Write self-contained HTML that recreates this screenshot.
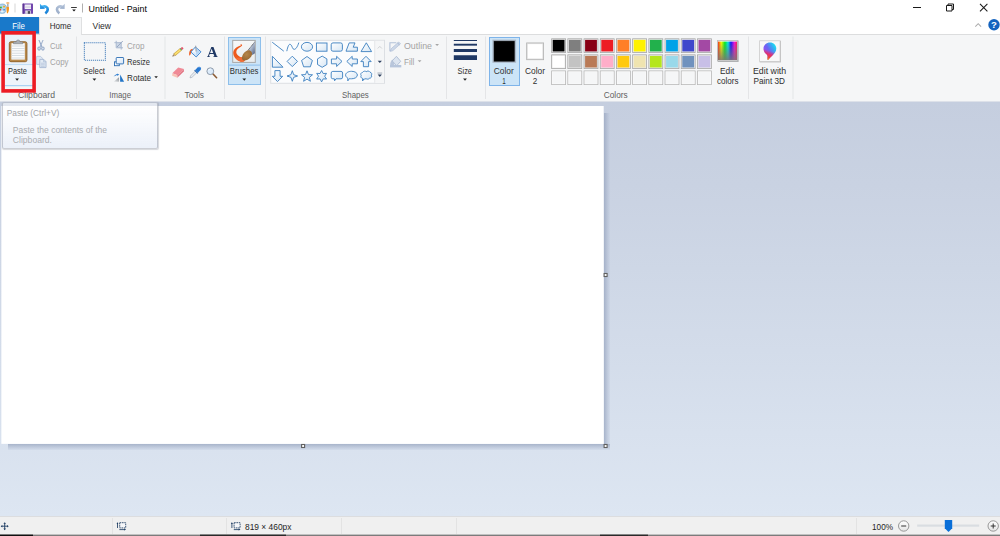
<!DOCTYPE html>
<html>
<head>
<meta charset="utf-8">
<title>Untitled - Paint</title>
<style>
html,body{margin:0;padding:0;}
body{width:1000px;height:536px;overflow:hidden;position:relative;background:#fff;font-family:"Liberation Sans",sans-serif;font-size:9px;color:#1e1e1e;}
.a{position:absolute;}
svg{overflow:visible;}
.t{position:absolute;white-space:nowrap;z-index:5;}
</style>
</head>
<body>

<div class="a" style="left:0px;top:0px;width:1000px;height:34px;background:#fff;"></div>
<div class="a" style="left:0px;top:34px;width:1000px;height:68px;background:#f5f6f7;border-top:1px solid #dcddde;box-sizing:border-box;"></div>
<div class="a" style="left:0px;top:102px;width:1000px;height:414px;background:linear-gradient(#c5cedf,#c9d2e2 20%,#dde6f2);"></div>
<div class="a" style="left:0px;top:101px;width:1000px;height:1px;background:#dde1e9;"></div>
<svg class="a" style="left:0px;top:17px;" width="40" height="18" viewBox="0 0 40 18"><rect x="0" y="0" width="39" height="16.7" rx="0" fill="#1979ca"/></svg>
<div class="a" style="left:39px;top:17px;width:43px;height:18px;background:#f5f6f7;border:1px solid #dfe0e1;border-bottom:none;box-sizing:border-box;"></div>
<div class="a" style="left:8px;top:444px;width:602px;height:6px;background:linear-gradient(rgba(156,169,194,.8),rgba(172,184,207,.5) 60%,rgba(195,206,226,.3));"></div>
<div class="a" style="left:604px;top:113px;width:6px;height:331px;background:linear-gradient(to right,rgba(156,169,194,.8),rgba(172,184,207,.5) 60%,rgba(195,206,226,.3));"></div>
<svg class="a" style="left:1px;top:106px;" width="604" height="339" viewBox="0 0 604 339"><g transform="translate(0.35 0)"><rect x="0" y="0" width="602.35" height="337.85" rx="0" fill="#fff"/></g></svg>
<svg class="a" style="left:603px;top:443px;" width="6" height="7" viewBox="0 0 6 7"><g transform="translate(0.55 0.95)"><rect x="0.55" y="0.55" width="2.9999999999999996" height="2.9999999999999996" rx="0" fill="#fff" stroke="#606060" stroke-width="1.1"/></g></svg>
<svg class="a" style="left:603px;top:272px;" width="6" height="7" viewBox="0 0 6 7"><g transform="translate(0.55 0.95)"><rect x="0.55" y="0.55" width="2.9999999999999996" height="2.9999999999999996" rx="0" fill="#fff" stroke="#606060" stroke-width="1.1"/></g></svg>
<svg class="a" style="left:301px;top:443px;" width="6" height="7" viewBox="0 0 6 7"><g transform="translate(0.05 0.95)"><rect x="0.55" y="0.55" width="2.9999999999999996" height="2.9999999999999996" rx="0" fill="#fff" stroke="#606060" stroke-width="1.1"/></g></svg>
<div class="a" style="left:0px;top:516px;width:1000px;height:19px;background:#f0f0f0;border-top:1px solid #dcdddf;box-sizing:border-box;"></div>
<div class="a" style="left:112px;top:518px;width:1px;height:16px;background:#e3e3e3;"></div>
<div class="a" style="left:226px;top:518px;width:1px;height:16px;background:#e3e3e3;"></div>
<div class="a" style="left:341px;top:518px;width:1px;height:16px;background:#e3e3e3;"></div>
<div class="a" style="left:456px;top:518px;width:1px;height:16px;background:#e3e3e3;"></div>
<div class="a" style="left:856px;top:518px;width:1px;height:16px;background:#e3e3e3;"></div>
<svg class="a" style="left:0px;top:534px;" width="1001" height="3" viewBox="0 0 1001 3"><g transform="translate(0 0.6)"><rect x="0" y="0" width="1000" height="1.4" rx="0" fill="#7c7c7c"/></g></svg>
<svg class="a" style="left:0px;top:534px;" width="34" height="3" viewBox="0 0 34 3"><g transform="translate(0 0.6)"><rect x="0" y="0" width="33" height="1.4" rx="0" fill="#111"/></g></svg>
<div class="t" style="left:0;top:0;font-size:9.2px;line-height:12px;height:12px;color:#000;transform:translate(88.60px,2.78px) scaleX(0.9679);transform-origin:0 0;">Untitled - Paint</div>
<div class="t" style="left:0;top:0;font-size:8.8px;line-height:12px;height:12px;color:#fff;transform:translate(12.20px,20.06px) scaleX(0.9027);transform-origin:0 0;">File</div>
<div class="t" style="left:0;top:0;font-size:8.8px;line-height:12px;height:12px;color:#2b2b2b;transform:translate(49.80px,20.06px) scaleX(0.9160);transform-origin:0 0;">Home</div>
<div class="t" style="left:0;top:0;font-size:8.8px;line-height:12px;height:12px;color:#2b2b2b;transform:translate(92.60px,20.06px) scaleX(0.9728);transform-origin:0 0;">View</div>
<svg class="a" style="left:76px;top:36px;" width="2" height="64" viewBox="0 0 2 64"><g transform="translate(0.0 0.5)"><rect x="0" y="0" width="1" height="62.5" rx="0" fill="#e4e5e7"/></g></svg>
<svg class="a" style="left:164px;top:36px;" width="3" height="64" viewBox="0 0 3 64"><g transform="translate(0.5 0.5)"><rect x="0" y="0" width="1" height="62.5" rx="0" fill="#e4e5e7"/></g></svg>
<svg class="a" style="left:224px;top:36px;" width="2" height="64" viewBox="0 0 2 64"><g transform="translate(0.0 0.5)"><rect x="0" y="0" width="1" height="62.5" rx="0" fill="#e4e5e7"/></g></svg>
<svg class="a" style="left:265px;top:36px;" width="2" height="64" viewBox="0 0 2 64"><g transform="translate(0.0 0.5)"><rect x="0" y="0" width="1" height="62.5" rx="0" fill="#e4e5e7"/></g></svg>
<svg class="a" style="left:446px;top:36px;" width="2" height="64" viewBox="0 0 2 64"><g transform="translate(0.0 0.5)"><rect x="0" y="0" width="1" height="62.5" rx="0" fill="#e4e5e7"/></g></svg>
<svg class="a" style="left:485px;top:36px;" width="2" height="64" viewBox="0 0 2 64"><g transform="translate(0.0 0.5)"><rect x="0" y="0" width="1" height="62.5" rx="0" fill="#e4e5e7"/></g></svg>
<svg class="a" style="left:748px;top:36px;" width="2" height="64" viewBox="0 0 2 64"><g transform="translate(0.0 0.5)"><rect x="0" y="0" width="1" height="62.5" rx="0" fill="#e4e5e7"/></g></svg>
<svg class="a" style="left:792px;top:36px;" width="3" height="64" viewBox="0 0 3 64"><g transform="translate(0.5 0.5)"><rect x="0" y="0" width="1" height="62.5" rx="0" fill="#e4e5e7"/></g></svg>
<div class="t" style="left:0;top:0;font-size:8.8px;line-height:12px;height:12px;color:#5f5f5f;transform:translate(18.00px,89.46px) scaleX(0.9824);transform-origin:0 0;">Clipboard</div>
<div class="t" style="left:0;top:0;font-size:8.8px;line-height:12px;height:12px;color:#5f5f5f;transform:translate(109.30px,89.46px) scaleX(0.8873);transform-origin:0 0;">Image</div>
<div class="t" style="left:0;top:0;font-size:8.8px;line-height:12px;height:12px;color:#5f5f5f;transform:translate(184.50px,89.46px) scaleX(0.9493);transform-origin:0 0;">Tools</div>
<div class="t" style="left:0;top:0;font-size:8.8px;line-height:12px;height:12px;color:#5f5f5f;transform:translate(342.00px,89.46px) scaleX(0.8946);transform-origin:0 0;">Shapes</div>
<div class="t" style="left:0;top:0;font-size:8.8px;line-height:12px;height:12px;color:#5f5f5f;transform:translate(603.80px,89.46px) scaleX(0.9399);transform-origin:0 0;">Colors</div>
<div class="t" style="left:0;top:0;font-size:8.8px;line-height:12px;height:12px;color:#2f2f2f;transform:translate(8.00px,65.06px) scaleX(0.8444);transform-origin:0 0;">Paste</div>
<div class="t" style="left:0;top:0;font-size:8.8px;line-height:12px;height:12px;color:#a3a3a3;transform:translate(50.00px,40.06px) scaleX(0.8763);transform-origin:0 0;">Cut</div>
<div class="t" style="left:0;top:0;font-size:8.8px;line-height:12px;height:12px;color:#a3a3a3;transform:translate(50.00px,56.06px) scaleX(0.9006);transform-origin:0 0;">Copy</div>
<div class="t" style="left:0;top:0;font-size:8.8px;line-height:12px;height:12px;color:#2f2f2f;transform:translate(83.30px,65.06px) scaleX(0.8873);transform-origin:0 0;">Select</div>
<div class="t" style="left:0;top:0;font-size:8.8px;line-height:12px;height:12px;color:#a3a3a3;transform:translate(127.00px,40.26px) scaleX(0.9175);transform-origin:0 0;">Crop</div>
<div class="t" style="left:0;top:0;font-size:8.8px;line-height:12px;height:12px;color:#2f2f2f;transform:translate(127.00px,56.26px) scaleX(0.8551);transform-origin:0 0;">Resize</div>
<div class="t" style="left:0;top:0;font-size:8.8px;line-height:12px;height:12px;color:#2f2f2f;transform:translate(127.00px,72.26px) scaleX(0.9257);transform-origin:0 0;">Rotate</div>
<div class="a" style="left:228px;top:37px;width:33px;height:48px;background:#cce4f7;border:1px solid #8dbfeb;box-sizing:border-box;"></div>
<svg class="a" style="left:229px;top:64px;" width="32" height="3" viewBox="0 0 32 3"><g transform="translate(0 0.6)"><rect x="0" y="0" width="31" height="1" rx="0" fill="#8dbfeb"/></g></svg>
<div class="t" style="left:0;top:0;font-size:8.8px;line-height:12px;height:12px;color:#2f2f2f;transform:translate(229.80px,65.26px) scaleX(0.8860);transform-origin:0 0;">Brushes</div>
<div class="t" style="left:0;top:0;font-size:8.8px;line-height:12px;height:12px;color:#a3a3a3;transform:translate(404.00px,40.26px) scaleX(1.0043);transform-origin:0 0;">Outline</div>
<div class="t" style="left:0;top:0;font-size:8.8px;line-height:12px;height:12px;color:#a3a3a3;transform:translate(404.00px,56.26px) scaleX(0.9252);transform-origin:0 0;">Fill</div>
<div class="t" style="left:0;top:0;font-size:8.8px;line-height:12px;height:12px;color:#2f2f2f;transform:translate(457.50px,65.26px) scaleX(0.8470);transform-origin:0 0;">Size</div>
<div class="a" style="left:489px;top:37px;width:31px;height:49px;background:#cce4f7;border:1px solid #7eb4ea;box-sizing:border-box;"></div>
<div class="t" style="left:0;top:0;font-size:8.8px;line-height:12px;height:12px;color:#2f2f2f;transform:translate(493.80px,65.26px) scaleX(0.9511);transform-origin:0 0;">Color</div>
<div class="t" style="left:0;top:0;font-size:8.8px;line-height:12px;height:12px;color:#2f2f2f;transform:translate(502.30px,74.56px) scaleX(0.7152);transform-origin:0 0;">1</div>
<div class="t" style="left:0;top:0;font-size:8.8px;line-height:12px;height:12px;color:#2f2f2f;transform:translate(525.00px,65.26px) scaleX(0.9511);transform-origin:0 0;">Color</div>
<div class="t" style="left:0;top:0;font-size:8.8px;line-height:12px;height:12px;color:#2f2f2f;transform:translate(532.80px,74.56px) scaleX(0.9196);transform-origin:0 0;">2</div>
<div class="t" style="left:0;top:0;font-size:8.8px;line-height:12px;height:12px;color:#2f2f2f;transform:translate(720.00px,65.26px) scaleX(0.9496);transform-origin:0 0;">Edit</div>
<div class="t" style="left:0;top:0;font-size:8.8px;line-height:12px;height:12px;color:#2f2f2f;transform:translate(717.00px,74.56px) scaleX(0.9160);transform-origin:0 0;">colors</div>
<div class="t" style="left:0;top:0;font-size:8.8px;line-height:12px;height:12px;color:#2f2f2f;transform:translate(753.00px,65.26px) scaleX(0.9983);transform-origin:0 0;">Edit with</div>
<div class="t" style="left:0;top:0;font-size:8.8px;line-height:12px;height:12px;color:#2f2f2f;transform:translate(753.50px,74.56px) scaleX(0.9333);transform-origin:0 0;">Paint 3D</div>
<div class="a" style="left:2px;top:102px;width:156px;height:47px;background:linear-gradient(rgba(255,255,255,.5),rgba(246,248,252,.7) 40%,rgba(232,238,248,.85));border:1px solid rgba(105,110,128,.34);border-radius:2px;box-sizing:border-box;box-shadow:0.5px 0.5px 1px rgba(120,125,140,.3);"></div>
<div class="t" style="left:0;top:0;font-size:8.8px;line-height:12px;height:12px;color:#a2a4a8;transform:translate(6.80px,107.26px) scaleX(0.9441);transform-origin:0 0;">Paste (Ctrl+V)</div>
<div class="t" style="left:0;top:0;font-size:8.8px;line-height:12px;height:12px;color:#aaacb0;transform:translate(12.80px,124.26px) scaleX(0.9677);transform-origin:0 0;">Paste the contents of the</div>
<div class="t" style="left:0;top:0;font-size:8.8px;line-height:12px;height:12px;color:#aaacb0;transform:translate(12.80px,133.86px) scaleX(0.9773);transform-origin:0 0;">Clipboard.</div>
<div class="t" style="left:0;top:0;font-size:8.8px;line-height:12px;height:12px;color:#1e1e1e;transform:translate(245.00px,520.56px) scaleX(0.9551);transform-origin:0 0;">819 × 460px</div>
<div class="t" style="left:0;top:0;font-size:8.8px;line-height:12px;height:12px;color:#1e1e1e;transform:translate(872.00px,520.56px) scaleX(0.9331);transform-origin:0 0;">100%</div>
<svg class="a" style="left:0px;top:2px;" width="11" height="13" viewBox="0 0 11 13">
<path d="M-3 7.2 C-3 3.6 0 2.0 2.6 2.0 C5.2 2.0 6.4 3.6 6.3 5.6 C6.2 7.0 5.4 7.4 5.6 8.6 C5.8 9.8 5.2 11.3 2.4 11.3 C-0.6 11.3 -3 10.2 -3 7.2 Z" fill="#b5d4ec" stroke="#6aa5cf" stroke-width="0.7"/>
<ellipse cx="2.2" cy="9.6" rx="1.5" ry="1.0" fill="#e9f3fb"/>
<circle cx="0.9" cy="5.5" r="1.0" fill="#37b34a"/>
<rect x="3.1" y="3.7" width="1.9" height="1.8" rx="0.4" fill="#f6b21b"/>
<circle cx="0.3" cy="7.7" r="0.9" fill="#e8473a"/>
<rect x="3.3" y="6.9" width="1.6" height="1.6" rx="0.4" fill="#3d8ed3"/>
<path d="M6.5 4.8 L8.9 4.8 C9.2 7 9 9.4 7.8 11.3 C7.2 11.6 6.9 11.0 6.8 10.2 C6.5 8.4 6.4 6.6 6.5 4.8 Z" fill="#f5961f"/>
<rect x="7.2" y="2.0" width="1.3" height="2.8" fill="#9a9fa6"/>
<ellipse cx="7.8" cy="1.0" rx="1.7" ry="1.0" fill="#f0b87c"/>
</svg>
<svg class="a" style="left:14px;top:3px;" width="3" height="11" viewBox="0 0 3 11"><g transform="translate(0.4 0.5)"><rect x="0" y="0" width="1.2" height="9" rx="0" fill="#dcdcdc"/></g></svg>
<svg class="a" style="left:22px;top:3px;" width="12" height="12" viewBox="0 0 12 12"><g transform="translate(0.6 0.6)">
<rect x="0" y="0" width="10.4" height="10.2" rx="0.6" fill="#7246ad"/>
<rect x="0" y="0" width="1.3" height="10.2" fill="#5c3592"/>
<rect x="2.1" y="0.9" width="6.3" height="4.6" fill="#f3f1f8"/>
<rect x="2.1" y="2.3" width="6.3" height="0.6" fill="#cfc8de"/>
<rect x="2.1" y="3.7" width="6.3" height="0.6" fill="#cfc8de"/>
<rect x="2.6" y="6.9" width="5.6" height="3.3" fill="#d9d9de"/>
<rect x="5.2" y="7.5" width="2.2" height="2.7" fill="#4c4c58"/>
</g></svg>
<svg class="a" style="left:39px;top:3px;" width="12" height="13" viewBox="0 0 12 13"><g transform="translate(0.7 0.4)"><defs><linearGradient id="ug" x1="0" y1="0" x2="0.6" y2="1"><stop offset="0" stop-color="#43b6f4"/><stop offset="1" stop-color="#1a82d8"/></linearGradient></defs><path d="M2.6 3.4 C5.6 2.4 8.3 3.6 8.0 6.2 C7.8 8.0 6.8 9.2 5.6 10.0" fill="none" stroke="url(#ug)" stroke-width="2.7" stroke-linecap="butt"/><path d="M0.2 0.3 L0.4 5.6 L5.4 5.3 Z" fill="url(#ug)"/></g></svg>
<svg class="a" style="left:55px;top:3px;" width="12" height="13" viewBox="0 0 12 13"><g transform="translate(0.2 0.4)"><defs><linearGradient id="rg" x1="0" y1="0" x2="0.6" y2="1"><stop offset="0" stop-color="#b4c3d9"/><stop offset="1" stop-color="#9fb1cc"/></linearGradient></defs><g transform="translate(9.8,0) scale(-1,1)"><path d="M2.6 3.4 C5.6 2.4 8.3 3.6 8.0 6.2 C7.8 8.0 6.8 9.2 5.6 10.0" fill="none" stroke="url(#rg)" stroke-width="2.7" stroke-linecap="butt"/><path d="M0.2 0.3 L0.4 5.6 L5.4 5.3 Z" fill="url(#rg)"/></g></g></svg>
<svg class="a" style="left:71px;top:7px;" width="7" height="2" viewBox="0 0 7 2"><g transform="translate(0.1 0.1)"><rect x="0" y="0" width="5.7" height="0.9" rx="0" fill="#222"/></g></svg>
<svg class="a" style="left:72px;top:9px;" width="5" height="4" viewBox="0 0 5 4"><g transform="translate(0.2 0.4)"><path d="M0 0 L3.6 0 L1.8 2.0 Z" fill="#111"/></g></svg>
<svg class="a" style="left:82px;top:3px;" width="2" height="11" viewBox="0 0 2 11"><g transform="translate(0.1 0.5)"><rect x="0" y="0" width="0.9" height="9" rx="0" fill="#a8a8a8"/></g></svg>
<div class="a" style="left:913px;top:7px;width:8px;height:1px;background:#1a1a1a;"></div>
<svg class="a" style="left:946px;top:3px;" width="9" height="10" viewBox="0 0 9 10"><g transform="translate(0 0.5)"><path d="M0.5 2 H6 V7.5 H0.5 Z M2 2 V0.5 H7.5 V6 H6" fill="none" stroke="#1a1a1a" stroke-width="1"/></g></svg>
<svg class="a" style="left:979px;top:3px;" width="10" height="10" viewBox="0 0 10 10"><g transform="translate(0.7 0.6)"><path d="M0.3 0.3 L7.7 7.7 M7.7 0.3 L0.3 7.7" stroke="#1a1a1a" stroke-width="1.05" fill="none"/></g></svg>
<svg class="a" style="left:975px;top:23px;" width="8" height="5" viewBox="0 0 8 5"><path d="M0.3 3.6 L3.2 0.7 L6.1 3.6" stroke="#adadad" stroke-width="1.05" fill="none"/></svg>
<svg class="a" style="left:988px;top:19px;" width="13" height="13" viewBox="0 0 13 13"><circle cx="6" cy="5.8" r="5.7" fill="#1463bf"/><text x="6" y="9.1" font-family="Liberation Sans, sans-serif" font-weight="bold" font-size="9.5" fill="#fff" text-anchor="middle">?</text></svg>
<div class="a" style="left:5px;top:35px;width:28px;height:51px;background:#e9f1fa;"></div>
<svg class="a" style="left:5px;top:64px;" width="29" height="3" viewBox="0 0 29 3"><g transform="translate(0 0.2)"><rect x="0" y="0" width="28" height="1" rx="0" fill="#b9d9f5"/></g></svg>
<svg class="a" style="left:5px;top:65px;" width="29" height="22" viewBox="0 0 29 22"><g transform="translate(0 0.2)"><rect x="0" y="0" width="28" height="20" rx="0" fill="#eef4fb"/></g></svg>
<svg class="a" style="left:5px;top:85px;" width="29" height="3" viewBox="0 0 29 3"><g transform="translate(0 0.2)"><rect x="0" y="0" width="28" height="1" rx="0" fill="#9ccaf2"/></g></svg>
<svg class="a" style="left:8px;top:39px;" width="21" height="25" viewBox="0 0 21 25"><g transform="translate(0.8 0.6)">
<rect x="0.5" y="2.2" width="17.6" height="19.9" rx="1.6" fill="#b98a4c" stroke="#94652b" stroke-width="1"/>
<rect x="2.6" y="3.6" width="13.4" height="16.4" fill="#fbfcfd"/>
<g fill="#cfd6dd"><rect x="2.6" y="6.0" width="13.4" height="0.8"/><rect x="2.6" y="8.4" width="13.4" height="0.8"/><rect x="2.6" y="10.8" width="13.4" height="0.8"/><rect x="2.6" y="13.2" width="13.4" height="0.8"/><rect x="2.6" y="15.6" width="13.4" height="0.8"/><rect x="2.6" y="18.0" width="13.4" height="0.8"/></g>
<path d="M4.6 4.2 L4.6 3 Q4.6 2.2 5.6 2.2 L7.4 2.2 Q7.6 0.3 9.3 0.3 Q11 0.3 11.2 2.2 L13 2.2 Q14 2.2 14 3 L14 4.2 Z" fill="#a9aeb4" stroke="#6f747a" stroke-width="0.5"/>
</g></svg>
<svg class="a" style="left:15px;top:78px;" width="5" height="4" viewBox="0 0 5 4"><g transform="translate(0.2 0.6)"><path d="M0 0 L3.8 0 L1.9 2.1 Z" fill="#222"/></g></svg>
<svg class="a" style="left:37px;top:39px;" width="9" height="13" viewBox="0 0 9 13"><g transform="translate(0.4 0.8)">
<path d="M1.0 0.3 L2.1 0.2 L5.0 6.6 L4.0 7.4 Z" fill="#93a8c8"/>
<path d="M6.2 0.3 L5.1 0.2 L2.2 6.6 L3.2 7.4 Z" fill="#a3b5d0"/>
<ellipse cx="1.7" cy="8.7" rx="1.25" ry="1.6" fill="#e6ebf3" stroke="#93a8c8" stroke-width="1.05"/>
<ellipse cx="5.5" cy="8.7" rx="1.25" ry="1.6" fill="#e6ebf3" stroke="#93a8c8" stroke-width="1.05"/>
</g></svg>
<svg class="a" style="left:36px;top:56px;" width="12" height="13" viewBox="0 0 12 13"><g transform="translate(0.2 0)">
<path d="M0.4 0.4 H4.4 L6.2 2.2 V8.4 H0.4 Z" fill="#dfe8f4" stroke="#b1c1d9" stroke-width="0.8"/>
<path d="M3.6 3.4 H7.6 L9.8 5.6 V11.6 H3.6 Z" fill="#e3ebf5" stroke="#a5b7d2" stroke-width="0.9"/>
<path d="M7.4 3.4 V5.8 H9.8" fill="none" stroke="#a5b7d2" stroke-width="0.7"/>
<path d="M4.8 7.2 H8.6 M4.8 8.8 H8.6 M4.8 10.3 H8.6" stroke="#b3c2d9" stroke-width="0.8"/>
</g></svg>
<svg class="a" style="left:1px;top:31px;z-index:6;" width="36" height="63" viewBox="0 0 36 63"><g transform="translate(0.3 0.05)"><rect x="1.8" y="1.8" width="31.0" height="58.05" rx="0" fill="none" stroke="#ed1c24" stroke-width="3.6"/></g></svg>
<svg class="a" style="left:83px;top:42px;" width="25" height="20" viewBox="0 0 25 20"><g transform="translate(0.6 0)"><rect x="0.75" y="0.75" width="21.0" height="17.5" fill="none" stroke="#2b6db3" stroke-width="1.05" stroke-dasharray="1 1"/></g></svg>
<svg class="a" style="left:92px;top:78px;" width="6" height="4" viewBox="0 0 6 4"><g transform="translate(0.5 0.6)"><path d="M0 0 L3.8 0 L1.9 2.1 Z" fill="#222"/></g></svg>
<svg class="a" style="left:114px;top:40px;" width="11" height="11" viewBox="0 0 11 11"><g transform="translate(0.4 0.8)">
<rect x="1.8" y="1.9" width="5" height="5.1" fill="#cdd7e6"/>
<path d="M1.8 0 V7 H8.6 M0 1.9 H6.8 V8.8" stroke="#a9b8cf" stroke-width="1" fill="none"/>
<path d="M2.6 6.2 L8.4 0.2" stroke="#8fa2be" stroke-width="0.9"/>
</g></svg>
<svg class="a" style="left:114px;top:57px;" width="12" height="11" viewBox="0 0 12 11">
<defs><linearGradient id="rsz" x1="0" y1="0" x2="1" y2="1"><stop offset="0" stop-color="#ffffff"/><stop offset="1" stop-color="#d3e4f6"/></linearGradient></defs>
<rect x="0.5" y="4.8" width="4.8" height="3.9" fill="#ffffff" stroke="#2b6db3" stroke-width="0.9"/>
<rect x="2.2" y="0.5" width="7.4" height="6.4" rx="0.6" fill="url(#rsz)" stroke="#2b6db3" stroke-width="0.9"/>
</svg>
<svg class="a" style="left:113px;top:73px;" width="13" height="11" viewBox="0 0 13 11"><g transform="translate(0.3 0.4)">
<defs><linearGradient id="rotg" x1="0" y1="1" x2="1" y2="0"><stop offset="0" stop-color="#e9ebed"/><stop offset="1" stop-color="#8a9097"/></linearGradient></defs>
<path d="M0.4 8.4 L5.7 8.4 L5.7 3.8 Z" fill="url(#rotg)"/>
<path d="M6.8 8.4 L10.8 8.4 L6.8 1.0 Z" fill="#2275c7"/>
<path d="M1.2 2.8 Q2.2 0.9 4.4 1.2" stroke="#2a7bd0" stroke-width="1" fill="none"/>
<path d="M3.9 0 L6 1.4 L3.8 2.4 Z" fill="#2a7bd0"/>
</g></svg>
<svg class="a" style="left:154px;top:76px;" width="5" height="4" viewBox="0 0 5 4"><g transform="translate(0.3 0.2)"><path d="M0 0 L3.6 0 L1.8 2.0 Z" fill="#222"/></g></svg>
<svg class="a" style="left:172px;top:46px;" width="13" height="13" viewBox="0 0 13 13"><g transform="translate(0 0.5)">
<g transform="rotate(-40 5.6 5.6)">
<path d="M-0.9 5.6 L1.9 4.4 L1.9 6.8 Z" fill="#e8c9a0" stroke="#8a6a3a" stroke-width="0.35"/>
<path d="M-0.9 5.6 L0.1 5.1 L0.1 6.1 Z" fill="#333"/>
<rect x="1.9" y="4.4" width="7.6" height="2.4" fill="#f6d24e" stroke="#a98522" stroke-width="0.4"/>
<rect x="1.9" y="5.2" width="7.6" height="0.8" fill="#fbe48a"/>
<rect x="9.5" y="4.4" width="1.0" height="2.4" fill="#4d9a58"/>
<rect x="10.5" y="4.4" width="2.0" height="2.4" rx="0.6" fill="#e4566a"/>
</g>
</g></svg>
<svg class="a" style="left:188px;top:45px;" width="15" height="14" viewBox="0 0 15 14"><g transform="translate(0.8 0.4)">
<path d="M3.6 3.4 C1.0 4.0 0.0 6.4 0.4 10.4 C1.9 9.6 2.0 8.2 2.4 7.2 C2.8 6.4 3.6 6.0 4.4 5.4 Z" fill="#f0591d"/>
<path d="M6.6 1.6 L12.2 6.4 L7.4 11.6 L2.0 6.6 Z" fill="#dbeafa" stroke="#3f86d0" stroke-width="0.95"/>
<path d="M6.8 2.6 L11.2 6.4 L7.4 10.6 Z" fill="#b6d6f5"/>
<path d="M6.8 2.6 L2.9 6.5 L7.3 7.2 Z" fill="#f7fbff"/>
<path d="M6.9 0.3 L7.3 5.4" stroke="#8d949c" stroke-width="0.9"/>
<circle cx="7.3" cy="5.6" r="0.8" fill="#aeb5bd"/>
</g></svg>
<div class="t" style="left:206.9px;top:43.6px;font-family:'Liberation Serif',serif;font-weight:bold;font-size:14.6px;line-height:16px;color:#1f3864;transform:scaleX(1.02);transform-origin:0 0;">A</div>
<svg class="a" style="left:172px;top:67px;" width="14" height="13" viewBox="0 0 14 13"><g transform="translate(0 0.3)">
<path d="M6.2 0.2 L12 1.8 L5.6 8.0 L0.3 6.0 Z" fill="#f08a96"/>
<path d="M0.3 6.0 L5.6 8.0 L5.3 10.5 L0.2 8.4 Z" fill="#f9c3b6"/>
<path d="M5.6 8.0 L12 1.8 L11.8 4.2 L5.3 10.5 Z" fill="#e27684"/>
</g></svg>
<svg class="a" style="left:189px;top:66px;" width="14" height="14" viewBox="0 0 14 14"><g transform="translate(0.6 0.5)">
<path d="M0.4 11.4 L1.0 9.4 L5.6 4.6 L7.2 6.2 L2.4 10.8 Z" fill="#e8edf2" stroke="#8d99a8" stroke-width="0.5"/>
<path d="M4.6 4.0 L7.8 7.2 L8.6 6.4 L5.4 3.2 Z" fill="#1b5fae"/>
<path d="M5.6 3.4 L8.4 0.6 Q10 -0.2 11.0 0.9 Q12.0 2.2 11.0 3.4 L8.4 6.2 Z" fill="#2878d0"/>
<path d="M8.6 1.0 Q9.8 0.4 10.5 1.2" stroke="#7db4ee" stroke-width="0.6" fill="none"/>
</g></svg>
<svg class="a" style="left:205px;top:66px;" width="14" height="14" viewBox="0 0 14 14"><g transform="translate(0.8 0.8)">
<path d="M7.0 7.0 L10.8 10.9" stroke="#8a5a33" stroke-width="1.6" stroke-linecap="round"/>
<circle cx="4.5" cy="4.4" r="3.4" fill="#dcebfa" stroke="#8492a3" stroke-width="0.9"/>
<path d="M2.6 3.6 Q3.2 2.4 4.8 2.3" stroke="#ffffff" stroke-width="0.8" fill="none"/>
</g></svg>
<svg class="a" style="left:232px;top:39px;" width="25" height="26" viewBox="0 0 25 26"><g transform="translate(0.2 0.9)">
<defs><linearGradient id="brg" x1="0" y1="0" x2="0" y2="1"><stop offset="0" stop-color="#f6f8f9"/><stop offset="1" stop-color="#e9eced"/></linearGradient>
<linearGradient id="brh" x1="0" y1="0" x2="1" y2="1"><stop offset="0" stop-color="#eef1f6"/><stop offset="0.45" stop-color="#aab6cc"/><stop offset="1" stop-color="#3b4a6b"/></linearGradient>
<radialGradient id="brb" cx="0.45" cy="0.4" r="0.7"><stop offset="0" stop-color="#b58649"/><stop offset="1" stop-color="#93632f"/></radialGradient>
<clipPath id="brc"><rect x="0.9" y="0.9" width="21.8" height="21.2"/></clipPath></defs>
<rect x="0.5" y="0.5" width="22.6" height="22" fill="url(#brg)" stroke="#a9a9a9" stroke-width="1"/>
<g clip-path="url(#brc)">
<path d="M9.9 5.1 C9.6 4.0 8.4 4.2 8.0 4.7 C8.6 4.8 8.9 5.2 8.6 5.6 C6.4 6.2 4.4 7.2 3.0 8.6 C1.4 10.2 0.8 12.0 1.0 13.6 C1.2 15.4 2.2 17.4 3.8 19.0 C5.6 20.8 7.8 21.9 10.0 21.9 C11.2 21.8 12.0 21.4 12.6 20.8 L10.4 16.9 C9.8 17.5 9.2 17.5 8.6 17.3 C7.4 16.9 6.2 16.2 5.4 15.2 C4.6 14.2 4.0 13.2 4.1 12.2 C4.2 11.0 4.6 10.0 5.4 9.2 C6.4 8.2 7.6 7.2 8.9 6.5 C9.6 6.1 10.0 5.7 9.9 5.1 Z" fill="#ee5a1c"/>
<path d="M3.4 17.6 C5.0 20.0 7.4 21.6 10.0 21.9 C11.2 21.8 12.0 21.4 12.6 20.8 L10.4 16.9 C8.6 18.0 5.6 18.0 3.4 17.6 Z" fill="#f26d35"/>
<path d="M16.0 10.2 L22.9 1.6 L24 1.6 L24 12.6 L20.2 15.2 Z" fill="url(#brh)"/>
<path d="M16.0 10.2 L22.9 1.6" stroke="#2a2a2a" stroke-width="0.7" stroke-dasharray="1.1 0.6" fill="none"/>
<path d="M9.9 19.2 C9.4 16.0 11.4 12.2 14.6 10.8 C16.4 10.0 18.4 10.6 19.4 12.0 C20.4 13.6 19.8 15.8 18.2 17.6 C16.4 19.6 13.6 20.9 11.4 20.5 C10.6 20.3 10.1 19.9 9.9 19.2 Z" fill="url(#brb)"/>
</g>
</g></svg>
<svg class="a" style="left:242px;top:78px;" width="6" height="4" viewBox="0 0 6 4"><g transform="translate(0.4 0.6)"><path d="M0 0 L3.8 0 L1.9 2.1 Z" fill="#222"/></g></svg>
<svg class="a" style="left:270px;top:39px;" width="116" height="46" viewBox="0 0 116 46"><g transform="translate(0.2 0.8)"><rect x="0.5" y="0.5" width="113.8" height="43" rx="0" fill="#fbfcfd" stroke="#dcdfe3" stroke-width="1"/></g></svg>
<svg class="a" style="left:374px;top:40px;" width="11" height="44" viewBox="0 0 11 44"><g transform="translate(0.3 0.8)"><rect x="0" y="0" width="9.7" height="42" rx="0" fill="#f5f6f7"/></g></svg>
<svg class="a" style="left:374px;top:40px;" width="3" height="44" viewBox="0 0 3 44"><g transform="translate(0.3 0.8)"><rect x="0" y="0" width="0.9" height="42" rx="0" fill="#e3e5e8"/></g></svg>
<svg class="a" style="left:0px;top:0px;pointer-events:none;" width="1001" height="111" viewBox="0 0 1001 111"><defs><linearGradient id="shg" x1="0" y1="0" x2="1" y2="1"><stop offset="0" stop-color="#ffffff"/><stop offset="1" stop-color="#d6e6f4"/></linearGradient></defs><g fill="url(#shg)" stroke="#3b7fc0" stroke-width="0.9" stroke-linejoin="miter"><path d="M272.2 42.2 L283.8 51.2" fill="none"/><path d="M286.8 51.2 C288.6 42.5 290.6 42.8 292.4 47.6 C293.8 51.2 296.8 49.2 298.8 42.6" fill="none"/><ellipse cx="307" cy="46.8" rx="5.6" ry="4.4"/><rect x="316.4" y="43" width="10.6" height="8.2"/><rect x="331.2" y="42.9" width="11.2" height="8.3" rx="1.8"/><path d="M349.2 42.9 L355 42.9 L353.2 47.2 L357.4 47.2 L357.4 51.2 L346 51.2 Z"/><path d="M366.3 42.8 L371.6 51.6 L361 51.6 Z"/><path d="M272.4 56.3 L272.4 67.2 L283 67.2 Z"/><path d="M292.3 56.2 L297.5 61.4 L292.3 66.6 L287.1 61.4 Z"/><polygon points="307.00,56.50 312.42,60.44 310.35,66.81 303.65,66.81 301.58,60.44"/><polygon points="322.20,56.10 326.88,58.90 326.88,64.50 322.20,67.30 317.52,64.50 317.52,58.90"/><path d="M331.4 59 L336.6 59 L336.6 56.3 L342 61.4 L336.6 66.5 L336.6 63.8 L331.4 63.8 Z"/><path d="M357.4 59 L352.2 59 L352.2 56.3 L346.8 61.4 L352.2 66.5 L352.2 63.8 L357.4 63.8 Z"/><path d="M366 56.3 L371.2 61.6 L368.6 61.6 L368.6 66.7 L363.4 66.7 L363.4 61.6 L360.8 61.6 Z"/><path d="M277.5 81.6 L272.3 76.3 L274.9 76.3 L274.9 70.6 L280.1 70.6 L280.1 76.3 L282.7 76.3 Z"/><polygon points="292.30,70.70 293.64,74.66 297.60,76.00 293.64,77.34 292.30,81.30 290.96,77.34 287.00,76.00 290.96,74.66"/><polygon points="307.00,70.80 308.47,74.58 312.52,74.81 309.38,77.37 310.41,81.29 307.00,79.10 303.59,81.29 304.62,77.37 301.48,74.81 305.53,74.58"/><polygon points="321.60,70.50 323.15,73.52 326.54,73.35 324.70,76.20 326.54,79.05 323.15,78.88 321.60,81.90 320.05,78.88 316.66,79.05 318.50,76.20 316.66,73.35 320.05,73.52"/><path d="M332.8 71.4 H341 Q342.6 71.4 342.6 73 V77.2 Q342.6 78.8 341 78.8 H336 L334.6 80.8 L334.4 78.8 H332.8 Q331.2 78.8 331.2 77.2 V73 Q331.2 71.4 332.8 71.4 Z"/><path d="M351.6 71.3 C355 71.3 357.4 73 357.4 75 C357.4 77.2 354.8 78.8 351.4 78.8 C350.6 78.8 350 78.7 349.4 78.6 L347.8 80.9 L347.8 78.2 C346.4 77.4 345.6 76.3 345.6 75 C345.6 73 348.2 71.3 351.6 71.3 Z"/><path d="M362.6 72.4 C363.4 70.9 365.4 70.9 366.2 71.7 C367.2 70.7 369.4 70.9 370 72.2 C371.6 72.4 372.2 74 371.4 75.2 C372.2 76.6 371.2 78.2 369.6 78.2 C368.8 79.4 366.8 79.4 366 78.6 C365.4 79.2 364.4 79.2 363.8 79 L362.6 81 L362.6 78.4 C361 78.2 360.4 76.6 361.2 75.4 C360.2 74.2 361 72.6 362.6 72.4 Z"/></g></svg>
<svg class="a" style="left:377px;top:46px;" width="7" height="4" viewBox="0 0 7 4"><g transform="translate(0.4 0)"><path d="M0.3 2.5 L2.4 0.4 L4.5 2.5" stroke="#c3c6ca" stroke-width="0.8" fill="none"/></g></svg>
<svg class="a" style="left:377px;top:60px;" width="6" height="5" viewBox="0 0 6 5"><g transform="translate(0.7 0.8)"><path d="M0 0 L4.2 0 L2.1 2.3 Z" fill="#2d4160"/></g></svg>
<svg class="a" style="left:377px;top:72px;" width="7" height="3" viewBox="0 0 7 3"><g transform="translate(0.4 0.6)"><rect x="0" y="0" width="4.8" height="0.9" rx="0" fill="#9aa4b1"/></g></svg>
<svg class="a" style="left:377px;top:74px;" width="6" height="4" viewBox="0 0 6 4"><g transform="translate(0.7 0.6)"><path d="M0 0 L4.2 0 L2.1 2.3 Z" fill="#2d4160"/></g></svg>
<svg class="a" style="left:389px;top:41px;" width="14" height="12" viewBox="0 0 14 12"><g transform="translate(0.3 0.4)">
<path d="M7 1.4 H0.6 V9.4 H2.2" stroke="#b3c2d9" stroke-width="1.1" fill="none"/>
<path d="M1.0 9.9 L1.8 7.4 L9.4 0.6 L11.2 2.4 L3.6 9.2 Z" fill="#cdd8e8" stroke="#b0bfd7" stroke-width="0.7"/>
<path d="M8.2 1.6 L10.2 3.4" stroke="#9fb1cd" stroke-width="0.9"/>
</g></svg>
<svg class="a" style="left:435px;top:44px;" width="5" height="4" viewBox="0 0 5 4"><g transform="translate(0.2 0.1)"><path d="M0 0 L3.8 0 L1.9 2.0 Z" fill="#a6a6a6"/></g></svg>
<svg class="a" style="left:389px;top:55px;" width="14" height="14" viewBox="0 0 14 14"><g transform="translate(0.8 0.8)">
<path d="M3.0 3.8 C1.0 5.0 0.4 7.0 0.3 9.4 L4.6 9.4 L4.4 6.0 Z" fill="#b9c6db"/>
<path d="M6.6 0.5 L10.9 5.5 L6.9 9.9 L2.4 5.1 Z" fill="#dde5f0" stroke="#aebcd3" stroke-width="0.9"/>
<rect x="0.2" y="9.2" width="11.3" height="2.4" fill="#b7c5db"/>
</g></svg>
<svg class="a" style="left:417px;top:60px;" width="6" height="4" viewBox="0 0 6 4"><g transform="translate(0.7 0.3)"><path d="M0 0 L3.8 0 L1.9 2.0 Z" fill="#a6a6a6"/></g></svg>
<svg class="a" style="left:453px;top:40px;" width="25" height="2" viewBox="0 0 25 2"><g transform="translate(0.8 0)"><rect x="0" y="0" width="23.2" height="1" rx="0" fill="#1f3864"/></g></svg>
<svg class="a" style="left:453px;top:43px;" width="25" height="4" viewBox="0 0 25 4"><g transform="translate(0.8 0.75)"><rect x="0" y="0" width="23.2" height="1.9" rx="0" fill="#1f3864"/></g></svg>
<svg class="a" style="left:453px;top:49px;" width="25" height="4" viewBox="0 0 25 4"><g transform="translate(0.8 0)"><rect x="0" y="0" width="23.2" height="3" rx="0" fill="#1f3864"/></g></svg>
<svg class="a" style="left:453px;top:55px;" width="25" height="6" viewBox="0 0 25 6"><g transform="translate(0.8 0.25)"><rect x="0" y="0" width="23.2" height="4.75" rx="0" fill="#1f3864"/></g></svg>
<svg class="a" style="left:463px;top:78px;" width="5" height="4" viewBox="0 0 5 4"><g transform="translate(0.1 0.6)"><path d="M0 0 L3.8 0 L1.9 2.1 Z" fill="#222"/></g></svg>
<svg class="a" style="left:0px;top:0px;" width="1001" height="111" viewBox="0 0 1001 111"><rect x="492.4" y="39.6" width="23.7" height="23.2" fill="#adb9c7"/><rect x="493.6" y="40.8" width="21.2" height="20.8" fill="#4a4f55"/><rect x="494.05" y="41.2" width="20.35" height="20.1" fill="#000"/></svg>
<svg class="a" style="left:0px;top:0px;" width="1001" height="111" viewBox="0 0 1001 111"><rect x="526.2" y="42.5" width="17.8" height="17.6" fill="#b4b4b4"/><rect x="527" y="43.3" width="16.2" height="16" fill="#dedede"/><rect x="527.8" y="44.1" width="14.6" height="14.4" fill="#fff"/></svg>
<svg class="a" style="left:0px;top:0px;" width="1001" height="111" viewBox="0 0 1001 111"><rect x="551.25" y="38.40" width="14.7" height="14.5" fill="#a4a4a4"/><rect x="552.00" y="39.15" width="13.2" height="13.0" fill="#ececec"/><rect x="552.70" y="39.85" width="11.8" height="11.6" fill="#000000"/><rect x="567.45" y="38.40" width="14.7" height="14.5" fill="#a4a4a4"/><rect x="568.20" y="39.15" width="13.2" height="13.0" fill="#ececec"/><rect x="568.90" y="39.85" width="11.8" height="11.6" fill="#7f7f7f"/><rect x="583.65" y="38.40" width="14.7" height="14.5" fill="#a4a4a4"/><rect x="584.40" y="39.15" width="13.2" height="13.0" fill="#ececec"/><rect x="585.10" y="39.85" width="11.8" height="11.6" fill="#880015"/><rect x="599.85" y="38.40" width="14.7" height="14.5" fill="#a4a4a4"/><rect x="600.60" y="39.15" width="13.2" height="13.0" fill="#ececec"/><rect x="601.30" y="39.85" width="11.8" height="11.6" fill="#ed1c24"/><rect x="616.05" y="38.40" width="14.7" height="14.5" fill="#a4a4a4"/><rect x="616.80" y="39.15" width="13.2" height="13.0" fill="#ececec"/><rect x="617.50" y="39.85" width="11.8" height="11.6" fill="#ff7f27"/><rect x="632.25" y="38.40" width="14.7" height="14.5" fill="#a4a4a4"/><rect x="633.00" y="39.15" width="13.2" height="13.0" fill="#ececec"/><rect x="633.70" y="39.85" width="11.8" height="11.6" fill="#fff200"/><rect x="648.45" y="38.40" width="14.7" height="14.5" fill="#a4a4a4"/><rect x="649.20" y="39.15" width="13.2" height="13.0" fill="#ececec"/><rect x="649.90" y="39.85" width="11.8" height="11.6" fill="#22b14c"/><rect x="664.65" y="38.40" width="14.7" height="14.5" fill="#a4a4a4"/><rect x="665.40" y="39.15" width="13.2" height="13.0" fill="#ececec"/><rect x="666.10" y="39.85" width="11.8" height="11.6" fill="#00a2e8"/><rect x="680.85" y="38.40" width="14.7" height="14.5" fill="#a4a4a4"/><rect x="681.60" y="39.15" width="13.2" height="13.0" fill="#ececec"/><rect x="682.30" y="39.85" width="11.8" height="11.6" fill="#3f48cc"/><rect x="697.05" y="38.40" width="14.7" height="14.5" fill="#a4a4a4"/><rect x="697.80" y="39.15" width="13.2" height="13.0" fill="#ececec"/><rect x="698.50" y="39.85" width="11.8" height="11.6" fill="#a349a4"/><rect x="551.25" y="54.45" width="14.7" height="14.5" fill="#a4a4a4"/><rect x="552.00" y="55.20" width="13.2" height="13.0" fill="#ececec"/><rect x="552.70" y="55.90" width="11.8" height="11.6" fill="#ffffff"/><rect x="567.45" y="54.45" width="14.7" height="14.5" fill="#a4a4a4"/><rect x="568.20" y="55.20" width="13.2" height="13.0" fill="#ececec"/><rect x="568.90" y="55.90" width="11.8" height="11.6" fill="#c3c3c3"/><rect x="583.65" y="54.45" width="14.7" height="14.5" fill="#a4a4a4"/><rect x="584.40" y="55.20" width="13.2" height="13.0" fill="#ececec"/><rect x="585.10" y="55.90" width="11.8" height="11.6" fill="#b97a57"/><rect x="599.85" y="54.45" width="14.7" height="14.5" fill="#a4a4a4"/><rect x="600.60" y="55.20" width="13.2" height="13.0" fill="#ececec"/><rect x="601.30" y="55.90" width="11.8" height="11.6" fill="#ffaec9"/><rect x="616.05" y="54.45" width="14.7" height="14.5" fill="#a4a4a4"/><rect x="616.80" y="55.20" width="13.2" height="13.0" fill="#ececec"/><rect x="617.50" y="55.90" width="11.8" height="11.6" fill="#ffc90e"/><rect x="632.25" y="54.45" width="14.7" height="14.5" fill="#a4a4a4"/><rect x="633.00" y="55.20" width="13.2" height="13.0" fill="#ececec"/><rect x="633.70" y="55.90" width="11.8" height="11.6" fill="#efe4b0"/><rect x="648.45" y="54.45" width="14.7" height="14.5" fill="#a4a4a4"/><rect x="649.20" y="55.20" width="13.2" height="13.0" fill="#ececec"/><rect x="649.90" y="55.90" width="11.8" height="11.6" fill="#b5e61d"/><rect x="664.65" y="54.45" width="14.7" height="14.5" fill="#a4a4a4"/><rect x="665.40" y="55.20" width="13.2" height="13.0" fill="#ececec"/><rect x="666.10" y="55.90" width="11.8" height="11.6" fill="#99d9ea"/><rect x="680.85" y="54.45" width="14.7" height="14.5" fill="#a4a4a4"/><rect x="681.60" y="55.20" width="13.2" height="13.0" fill="#ececec"/><rect x="682.30" y="55.90" width="11.8" height="11.6" fill="#7092be"/><rect x="697.05" y="54.45" width="14.7" height="14.5" fill="#a4a4a4"/><rect x="697.80" y="55.20" width="13.2" height="13.0" fill="#ececec"/><rect x="698.50" y="55.90" width="11.8" height="11.6" fill="#c8bfe7"/><rect x="551.25" y="70.50" width="14.7" height="14.5" fill="#b4b4b4"/><rect x="552.00" y="71.25" width="13.2" height="13.0" fill="#fafafa"/><rect x="552.70" y="71.95" width="11.8" height="11.6" fill="#f5f6f7"/><rect x="567.45" y="70.50" width="14.7" height="14.5" fill="#b4b4b4"/><rect x="568.20" y="71.25" width="13.2" height="13.0" fill="#fafafa"/><rect x="568.90" y="71.95" width="11.8" height="11.6" fill="#f5f6f7"/><rect x="583.65" y="70.50" width="14.7" height="14.5" fill="#b4b4b4"/><rect x="584.40" y="71.25" width="13.2" height="13.0" fill="#fafafa"/><rect x="585.10" y="71.95" width="11.8" height="11.6" fill="#f5f6f7"/><rect x="599.85" y="70.50" width="14.7" height="14.5" fill="#b4b4b4"/><rect x="600.60" y="71.25" width="13.2" height="13.0" fill="#fafafa"/><rect x="601.30" y="71.95" width="11.8" height="11.6" fill="#f5f6f7"/><rect x="616.05" y="70.50" width="14.7" height="14.5" fill="#b4b4b4"/><rect x="616.80" y="71.25" width="13.2" height="13.0" fill="#fafafa"/><rect x="617.50" y="71.95" width="11.8" height="11.6" fill="#f5f6f7"/><rect x="632.25" y="70.50" width="14.7" height="14.5" fill="#b4b4b4"/><rect x="633.00" y="71.25" width="13.2" height="13.0" fill="#fafafa"/><rect x="633.70" y="71.95" width="11.8" height="11.6" fill="#f5f6f7"/><rect x="648.45" y="70.50" width="14.7" height="14.5" fill="#b4b4b4"/><rect x="649.20" y="71.25" width="13.2" height="13.0" fill="#fafafa"/><rect x="649.90" y="71.95" width="11.8" height="11.6" fill="#f5f6f7"/><rect x="664.65" y="70.50" width="14.7" height="14.5" fill="#b4b4b4"/><rect x="665.40" y="71.25" width="13.2" height="13.0" fill="#fafafa"/><rect x="666.10" y="71.95" width="11.8" height="11.6" fill="#f5f6f7"/><rect x="680.85" y="70.50" width="14.7" height="14.5" fill="#b4b4b4"/><rect x="681.60" y="71.25" width="13.2" height="13.0" fill="#fafafa"/><rect x="682.30" y="71.95" width="11.8" height="11.6" fill="#f5f6f7"/><rect x="697.05" y="70.50" width="14.7" height="14.5" fill="#b4b4b4"/><rect x="697.80" y="71.25" width="13.2" height="13.0" fill="#fafafa"/><rect x="698.50" y="71.95" width="11.8" height="11.6" fill="#f5f6f7"/></svg>
<svg class="a" style="left:717px;top:40px;" width="23" height="23" viewBox="0 0 23 23">
<defs>
<linearGradient id="rb" x1="0" y1="0" x2="1" y2="0"><stop offset="0" stop-color="#ff2a1a"/><stop offset="0.17" stop-color="#f6ff00"/><stop offset="0.36" stop-color="#00f020"/><stop offset="0.53" stop-color="#00e8f0"/><stop offset="0.68" stop-color="#1010ff"/><stop offset="0.86" stop-color="#f010e0"/><stop offset="1" stop-color="#ff2050"/></linearGradient>
<linearGradient id="rbv" x1="0" y1="0" x2="0" y2="1"><stop offset="0" stop-color="#7d7474" stop-opacity="0"/><stop offset="1" stop-color="#7d7474" stop-opacity="0.88"/></linearGradient>
</defs>
<rect x="0.6" y="0.5" width="21" height="21.4" fill="#a9abab"/>
<rect x="0.1" y="0" width="20.6" height="21" fill="#b9bbbb"/>
<rect x="0.9" y="0.8" width="19.2" height="19.6" fill="#f4f4f4"/>
<rect x="1" y="1.6" width="19" height="18.4" fill="url(#rb)"/>
<rect x="0.9" y="1.5" width="19.2" height="18.6" fill="url(#rbv)"/>
</svg>
<svg class="a" style="left:759px;top:40px;" width="23" height="24" viewBox="0 0 23 24"><g transform="translate(0 0.2)">
<defs>
<linearGradient id="p3a" x1="0" y1="0.65" x2="0.8" y2="0"><stop offset="0" stop-color="#a04df5"/><stop offset="0.45" stop-color="#6d63f2"/><stop offset="0.8" stop-color="#2fb4f2"/><stop offset="1" stop-color="#1fe3f0"/></linearGradient>
<linearGradient id="p3b" x1="0.62" y1="0.1" x2="0.38" y2="1"><stop offset="0.42" stop-color="#e8306a" stop-opacity="0"/><stop offset="0.66" stop-color="#e32f6c" stop-opacity="1"/><stop offset="0.84" stop-color="#ea4a3a"/><stop offset="1" stop-color="#f5a60e"/></linearGradient>
<filter id="p3f" x="-10%" y="-10%" width="120%" height="120%"><feGaussianBlur stdDeviation="0.35"/></filter>
</defs>
<rect x="0.6" y="0.6" width="21.4" height="21.6" fill="#bdbdbd"/>
<rect x="0.2" y="0.2" width="21.2" height="21.4" fill="#d2d2d2"/>
<rect x="1" y="1" width="19.6" height="19.8" fill="#f8f8f8"/>
<g filter="url(#p3f)">
<path id="p3p" d="M11.0 2.2 C14.6 2.2 17.3 4.9 17.3 8.3 C17.3 11.2 15.6 13.2 13.6 15.0 C11.8 16.6 10.6 18.0 9.6 19.4 C9.2 20.0 8.4 19.8 8.4 19.0 C8.4 17.6 8.8 16.4 8.4 15.4 C8.0 14.4 7.2 13.8 6.4 13.0 C5.2 11.8 4.5 10.2 4.5 8.3 C4.5 4.9 7.4 2.2 11.0 2.2 Z" fill="url(#p3a)"/>
<path d="M11.0 2.2 C14.6 2.2 17.3 4.9 17.3 8.3 C17.3 11.2 15.6 13.2 13.6 15.0 C11.8 16.6 10.6 18.0 9.6 19.4 C9.2 20.0 8.4 19.8 8.4 19.0 C8.4 17.6 8.8 16.4 8.4 15.4 C8.0 14.4 7.2 13.8 6.4 13.0 C5.2 11.8 4.5 10.2 4.5 8.3 C4.5 4.9 7.4 2.2 11.0 2.2 Z" fill="url(#p3b)"/>
</g>
</g></svg>
<svg class="a" style="left:0px;top:522px;" width="10" height="10" viewBox="0 0 10 10"><g transform="translate(0.7 0.2)">
<path d="M4 0.8 V7.2 M0.8 4 H7.2" stroke="#1f3d63" stroke-width="0.9" fill="none"/>
<path d="M4 0 L5.3 1.6 H2.7 Z M4 8 L5.3 6.4 H2.7 Z M0 4 L1.6 2.7 V5.3 Z M8 4 L6.4 2.7 V5.3 Z" fill="#1f3d63"/>
</g></svg>
<svg class="a" style="left:116px;top:522px;" width="12" height="10" viewBox="0 0 12 10"><g transform="translate(0.6 0.2)">
<rect x="3.1" y="0.5" width="6" height="5.2" fill="#f6f7f9" stroke="#1f3d63" stroke-width="0.85" stroke-dasharray="1.6 0.7"/>
<path d="M0.9 0.6 V5.8" stroke="#1f3d63" stroke-width="0.85"/>
<path d="M0 1.7 L0.9 0 L1.8 1.7 Z" fill="#1f3d63"/>
<path d="M2.8 7.4 H8.4" stroke="#1f3d63" stroke-width="0.85"/>
<path d="M7.6 6.4 L9.5 7.4 L7.6 8.4 Z" fill="#1f3d63"/>
</g></svg>
<svg class="a" style="left:231px;top:522px;" width="11" height="10" viewBox="0 0 11 10"><g transform="translate(0 0.2)">
<rect x="3.1" y="0.5" width="6" height="5.2" fill="#f6f7f9" stroke="#1f3d63" stroke-width="0.85" stroke-dasharray="1.6 0.7"/>
<path d="M0.9 0.6 V5.8" stroke="#1f3d63" stroke-width="0.85"/>
<path d="M0 1.7 L0.9 0 L1.8 1.7 Z" fill="#1f3d63"/>
<path d="M2.8 7.4 H8.4" stroke="#1f3d63" stroke-width="0.85"/>
<path d="M7.6 6.4 L9.5 7.4 L7.6 8.4 Z" fill="#1f3d63"/>
</g></svg>
<svg class="a" style="left:897px;top:520px;" width="14" height="13" viewBox="0 0 14 13"><g transform="translate(0.9 0.2)">
<defs><linearGradient id="zc0" x1="0" y1="0" x2="0" y2="1"><stop offset="0" stop-color="#ffffff"/><stop offset="1" stop-color="#e4e4e4"/></linearGradient></defs>
<circle cx="5.8" cy="5.8" r="5.2" fill="url(#zc0)" stroke="#8e8e8e" stroke-width="0.9"/>
<path d="M3.3 5.8 H8.3" stroke="#333" stroke-width="1"/></g></svg>
<svg class="a" style="left:987px;top:520px;" width="13" height="13" viewBox="0 0 13 13"><g transform="translate(0.4 0.2)">
<defs><linearGradient id="zc1" x1="0" y1="0" x2="0" y2="1"><stop offset="0" stop-color="#ffffff"/><stop offset="1" stop-color="#e4e4e4"/></linearGradient></defs>
<circle cx="5.8" cy="5.8" r="5.2" fill="url(#zc1)" stroke="#8e8e8e" stroke-width="0.9"/>
<path d="M3.3 5.8 H8.3" stroke="#333" stroke-width="1"/><path d="M5.8 3.3 V8.3" stroke="#333" stroke-width="1"/></g></svg>
<svg class="a" style="left:917px;top:524px;" width="64" height="4" viewBox="0 0 64 4"><g transform="translate(0.2 0.5)"><rect x="0" y="0" width="62" height="2.2" rx="0" fill="#d9dde1"/></g></svg>
<svg class="a" style="left:944px;top:520px;" width="10" height="13" viewBox="0 0 10 13"><g transform="translate(0.8 0)"><path d="M0.4 0 H7 Q7.4 0 7.4 0.4 V8.2 L3.7 12 L0 8.2 V0.4 Q0 0 0.4 0 Z" fill="#0a6fd8"/></g></svg>
<svg class="a" style="left:200px;top:534px;" width="87" height="3" viewBox="0 0 87 3"><g transform="translate(0 0.6)"><rect x="0" y="0" width="86" height="1.4" rx="0" fill="#2a2a2a"/></g></svg>
<svg class="a" style="left:600px;top:534px;" width="49" height="3" viewBox="0 0 49 3"><g transform="translate(0 0.6)"><rect x="0" y="0" width="48" height="1.4" rx="0" fill="#2a2a2a"/></g></svg>
</body>
</html>
